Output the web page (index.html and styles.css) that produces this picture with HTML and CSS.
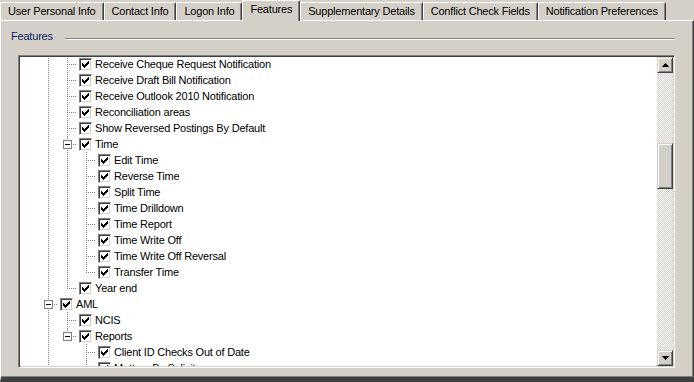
FILE: index.html
```html
<!DOCTYPE html>
<html lang="en">
<head>
    <meta charset="UTF-8">
    <title>Features</title>
    <link rel="stylesheet" href="styles.css">
</head>
<body>
    <div class="window">
        <div class="tabs">
            <div class="tab">User Personal Info</div>
            <div class="tab">Contact Info</div>
            <div class="tab">Logon Info</div>
            <div class="tab active">Features</div>
            <div class="tab">Supplementary Details</div>
            <div class="tab">Conflict Check Fields</div>
            <div class="tab">Notification Preferences</div>
        </div>
        <div class="panel">
            <div class="group-head">
                <span class="group-title">Features</span>
                <span class="group-line"></span>
            </div>
            <div class="tree-box">
                <div class="tree">
                    <div class="rows">
                        <div class="row"><span class="cell"></span><span class="cell pipe"></span><span class="cell tee"></span><span class="check"></span><span class="label">Receive Cheque Request Notification</span></div>
                        <div class="row"><span class="cell"></span><span class="cell pipe"></span><span class="cell tee"></span><span class="check"></span><span class="label">Receive Draft Bill Notification</span></div>
                        <div class="row"><span class="cell"></span><span class="cell pipe"></span><span class="cell tee"></span><span class="check"></span><span class="label">Receive Outlook 2010 Notification</span></div>
                        <div class="row"><span class="cell"></span><span class="cell pipe"></span><span class="cell tee"></span><span class="check"></span><span class="label">Reconciliation areas</span></div>
                        <div class="row"><span class="cell"></span><span class="cell pipe"></span><span class="cell tee"></span><span class="check"></span><span class="label">Show Reversed Postings By Default</span></div>
                        <div class="row"><span class="cell"></span><span class="cell pipe"></span><span class="cell tee"><span class="expander"></span></span><span class="check"></span><span class="label">Time</span></div>
                        <div class="row"><span class="cell"></span><span class="cell pipe"></span><span class="cell pipe"></span><span class="cell tee"></span><span class="check"></span><span class="label">Edit Time</span></div>
                        <div class="row"><span class="cell"></span><span class="cell pipe"></span><span class="cell pipe"></span><span class="cell tee"></span><span class="check"></span><span class="label">Reverse Time</span></div>
                        <div class="row"><span class="cell"></span><span class="cell pipe"></span><span class="cell pipe"></span><span class="cell tee"></span><span class="check"></span><span class="label">Split Time</span></div>
                        <div class="row"><span class="cell"></span><span class="cell pipe"></span><span class="cell pipe"></span><span class="cell tee"></span><span class="check"></span><span class="label">Time Drilldown</span></div>
                        <div class="row"><span class="cell"></span><span class="cell pipe"></span><span class="cell pipe"></span><span class="cell tee"></span><span class="check"></span><span class="label">Time Report</span></div>
                        <div class="row"><span class="cell"></span><span class="cell pipe"></span><span class="cell pipe"></span><span class="cell tee"></span><span class="check"></span><span class="label">Time Write Off</span></div>
                        <div class="row"><span class="cell"></span><span class="cell pipe"></span><span class="cell pipe"></span><span class="cell tee"></span><span class="check"></span><span class="label">Time Write Off Reversal</span></div>
                        <div class="row"><span class="cell"></span><span class="cell pipe"></span><span class="cell pipe"></span><span class="cell elbow"></span><span class="check"></span><span class="label">Transfer Time</span></div>
                        <div class="row"><span class="cell"></span><span class="cell pipe"></span><span class="cell elbow"></span><span class="check"></span><span class="label">Year end</span></div>
                        <div class="row"><span class="cell"></span><span class="cell tee"><span class="expander"></span></span><span class="check"></span><span class="label">AML</span></div>
                        <div class="row"><span class="cell"></span><span class="cell pipe"></span><span class="cell tee"></span><span class="check"></span><span class="label">NCIS</span></div>
                        <div class="row"><span class="cell"></span><span class="cell pipe"></span><span class="cell elbow"><span class="expander"></span></span><span class="check"></span><span class="label">Reports</span></div>
                        <div class="row"><span class="cell"></span><span class="cell pipe"></span><span class="cell"></span><span class="cell tee"></span><span class="check"></span><span class="label">Client ID Checks Out of Date</span></div>
                        <div class="row"><span class="cell"></span><span class="cell pipe"></span><span class="cell"></span><span class="cell tee"></span><span class="check"></span><span class="label">Matters By Solicitor</span></div>
                    </div>
                </div>
                <div class="scrollbar">
                    <div class="sb-btn">
                        <svg width="7" height="4" viewBox="0 0 7 4"><path d="M3 0h1v1h1v1h1v1h1v1H0V3h1V2h1V1h1z"/></svg>
                    </div>
                    <div class="sb-track"><div class="sb-thumb"></div></div>
                    <div class="sb-btn">
                        <svg width="7" height="4" viewBox="0 0 7 4"><path d="M0 0h7v1H6v1H5v1H4v1H3V3H2V2H1V1H0z"/></svg>
                    </div>
                </div>
            </div>
        </div>
    </div>
</body>
</html>
```
FILE: styles.css
```css
body {
    margin: 0;
    background-color: #d4d0c8;
    font-family: "Liberation Sans", Arial, sans-serif;
    font-size: 11px;
    letter-spacing: -0.2px;
    color: #000;
}
.window {
    height: 382px;
    display: flex;
    flex-direction: column;
}

/* tab strip */
.tabs {
    display: flex;
    align-items: flex-end;
    height: 20px;
    position: relative;
    z-index: 1;
}
.tab {
    box-sizing: border-box;
    height: 18px;
    padding: 2px 7px 0 7px;
    line-height: 13px;
    white-space: nowrap;
    border-top: 1px solid #fff;
    border-left: 1px solid #fff;
    border-right: 1px solid #404040;
    border-radius: 2px 2px 0 0;
    box-shadow: inset -1px 0 #808080;
}
.tab.active {
    height: 21px;
    margin-bottom: -1px;
    background-color: #d4d0c8;
}

/* page panel */
.panel {
    flex: 1;
    padding: 8px 18px 0 9px;
    border-top: 1px solid #fff;
    border-left: 1px solid #fff;
    border-right: 1px solid #404040;
    border-bottom: 5px solid #404040;
    box-shadow: inset -1px -1px #808080;
}
.group-head {
    display: flex;
    height: 14px;
}
.group-title {
    color: #0a246a;
    line-height: 14px;
    padding-left: 1px;
}
.group-line {
    flex: 1;
    height: 0;
    margin: 9px 0 0 12px;
    border-top: 1px solid #808080;
    border-bottom: 1px solid #fff;
}

/* tree view */
.tree-box {
    display: flex;
    box-sizing: border-box;
    height: 313px;
    margin: 12px 0 0 8px;
    padding: 1px;
    background-color: #fff;
    border: 1px solid;
    border-color: #808080 #fff #fff #808080;
    box-shadow: inset 1px 1px #404040, inset -1px -1px #d4d0c8;
}
.tree {
    flex: 1;
    overflow: hidden;
}
.rows {
    margin-top: -1px;
}
.row {
    display: flex;
    height: 16px;
    white-space: nowrap;
}
.cell {
    display: flex;
    flex: none;
    width: 19px;
    height: 16px;
}
.pipe {
    background: repeating-linear-gradient(to bottom, #808080 0 1px, transparent 1px 2px) 9px 0 / 1px 16px no-repeat;
}
.tee {
    background:
        repeating-linear-gradient(to bottom, #808080 0 1px, transparent 1px 2px) 9px 0 / 1px 16px no-repeat,
        repeating-linear-gradient(to right, #808080 0 1px, transparent 1px 2px) 11px 8px / 8px 1px no-repeat;
}
.elbow {
    background:
        repeating-linear-gradient(to bottom, #808080 0 1px, transparent 1px 2px) 9px 0 / 1px 9px no-repeat,
        repeating-linear-gradient(to right, #808080 0 1px, transparent 1px 2px) 11px 8px / 8px 1px no-repeat;
}
.expander {
    box-sizing: border-box;
    width: 9px;
    height: 9px;
    margin: 4px 0 0 5px;
    background-color: #fff;
    border: 1px solid #808080;
}
.expander::after {
    content: "";
    display: block;
    width: 5px;
    height: 1px;
    margin: 3px 0 0 1px;
    background-color: #000;
}
.check {
    flex: none;
    box-sizing: border-box;
    width: 13px;
    height: 13px;
    margin: 2px 0 0 2px;
    border: 1px solid;
    border-color: #808080 #fff #fff #808080;
    box-shadow: inset 1px 1px #404040, inset -1px -1px #d4d0c8;
    background: #fff url("data:image/svg+xml,%3Csvg xmlns='http://www.w3.org/2000/svg' width='7' height='7'%3E%3Cpath d='M6 0h1v3H6zM5 1h1v3H5zM4 2h1v3H4zM3 3h1v3H3zM2 4h1v3H2zM1 3h1v3H1zM0 2h1v3H0z'/%3E%3C/svg%3E") 2px 2px no-repeat;
}
.label {
    margin-left: 2px;
    padding: 0 1px;
    line-height: 16px;
}

/* scroll bar */
.scrollbar {
    display: flex;
    flex-direction: column;
    flex: none;
    width: 16px;
}
.sb-btn, .sb-thumb {
    box-sizing: border-box;
    background-color: #d4d0c8;
    border: 1px solid;
    border-color: #d4d0c8 #404040 #404040 #d4d0c8;
    box-shadow: inset 1px 1px #fff, inset -1px -1px #808080;
}
.sb-btn {
    display: flex;
    align-items: center;
    justify-content: center;
    height: 16px;
}
.sb-btn svg {
    display: block;
}
.sb-track {
    flex: 1;
    background: repeating-conic-gradient(#d4d0c8 0 25%, #fff 0 50%) 0 0 / 2px 2px;
}
.sb-thumb {
    height: 46px;
    margin-top: 70px;
}
```
